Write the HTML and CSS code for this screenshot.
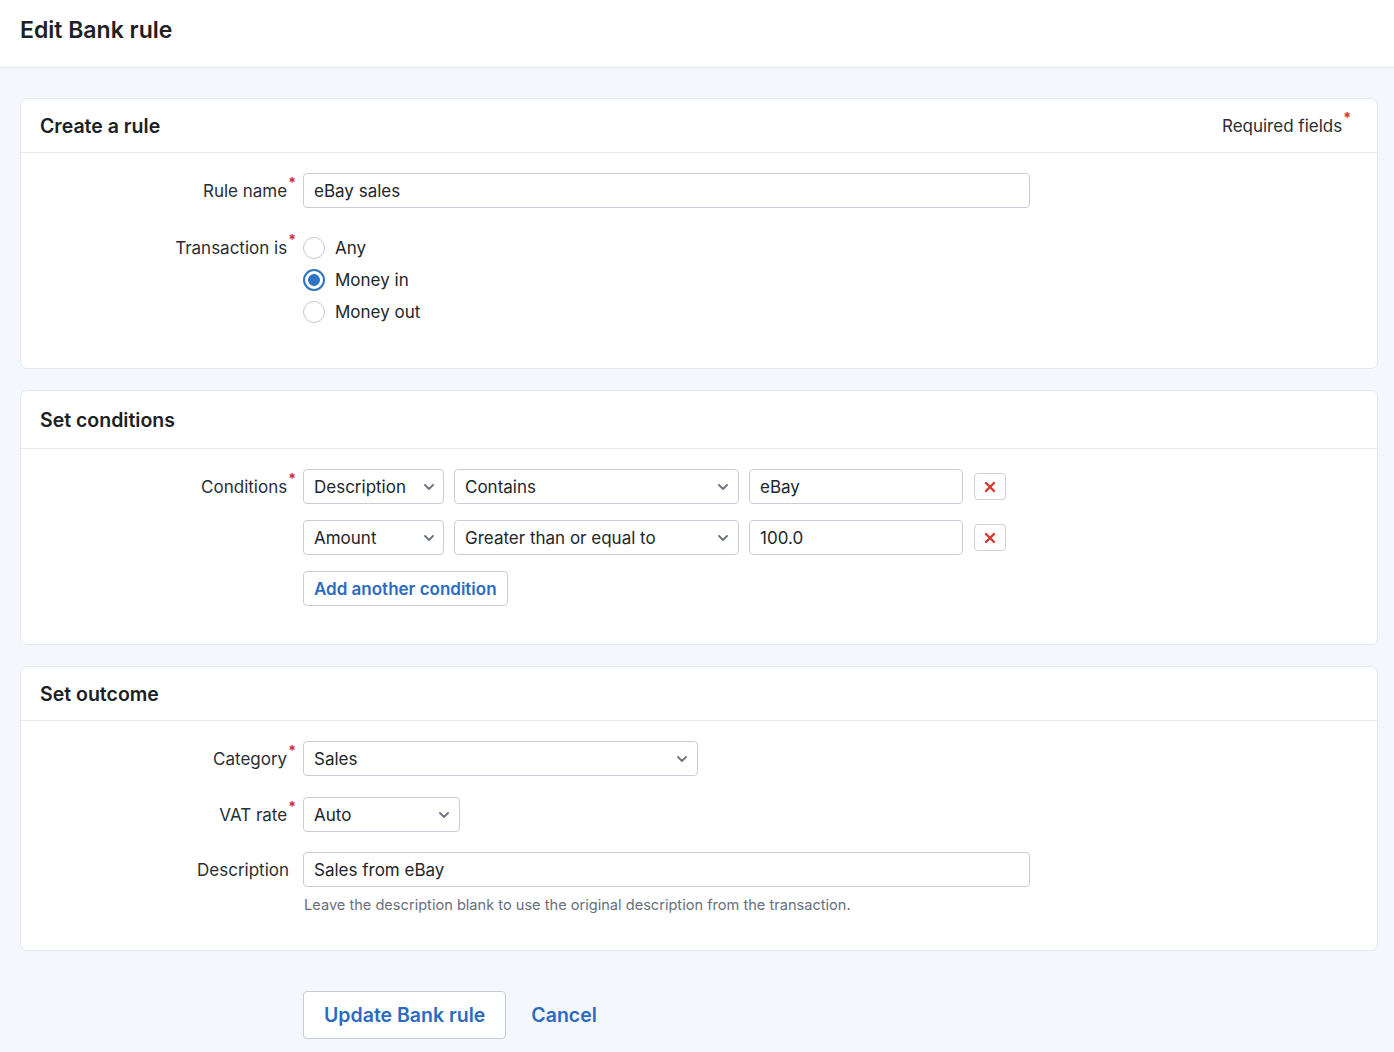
FILE: index.html
```html
<!DOCTYPE html>
<html lang="en">
<head>
<meta charset="utf-8">
<title>Edit Bank rule</title>
<link rel="stylesheet" href="styles.css">
</head>
<body>
<header class="page-header">
  <h1 class="page-title">Edit Bank rule</h1>
</header>
<main class="page-body">
  <section class="card">
    <div class="card-head">
      <h2 class="card-title">Create a rule</h2>
      <span class="req-note">Required fields<span class="star">*</span></span>
    </div>
    <div class="card-body body-rule">
      <div class="row">
        <label class="label">Rule name<span class="star">*</span></label>
        <div class="field input wide">eBay sales</div>
      </div>
      <div class="row row-top">
        <label class="label label-radio">Transaction is<span class="star">*</span></label>
        <div class="radios">
          <div class="radio-item"><span class="radio"></span>Any</div>
          <div class="radio-item"><span class="radio checked"></span>Money in</div>
          <div class="radio-item"><span class="radio"></span>Money out</div>
        </div>
      </div>
    </div>
  </section>

  <section class="card">
    <div class="card-head head-tall">
      <h2 class="card-title">Set conditions</h2>
    </div>
    <div class="card-body body-cond">
      <div class="row">
        <label class="label">Conditions<span class="star">*</span></label>
        <div class="cond">
          <div class="field select w-field">Description<svg class="chev" viewBox="0 0 10 6"><path d="M1 1l4 4 4-4"/></svg></div>
          <div class="field select w-op">Contains<svg class="chev" viewBox="0 0 10 6"><path d="M1 1l4 4 4-4"/></svg></div>
          <div class="field input w-val">eBay</div>
          <button class="remove" type="button"><svg viewBox="0 0 12 12"><path d="M2 2l8 8M10 2l-8 8"/></svg></button>
        </div>
      </div>
      <div class="row">
        <span class="label"></span>
        <div class="cond">
          <div class="field select w-field">Amount<svg class="chev" viewBox="0 0 10 6"><path d="M1 1l4 4 4-4"/></svg></div>
          <div class="field select w-op">Greater than or equal to<svg class="chev" viewBox="0 0 10 6"><path d="M1 1l4 4 4-4"/></svg></div>
          <div class="field input w-val">100.0</div>
          <button class="remove" type="button"><svg viewBox="0 0 12 12"><path d="M2 2l8 8M10 2l-8 8"/></svg></button>
        </div>
      </div>
      <div class="row">
        <span class="label"></span>
        <button class="btn-add" type="button">Add another condition</button>
      </div>
    </div>
  </section>

  <section class="card">
    <div class="card-head">
      <h2 class="card-title">Set outcome</h2>
    </div>
    <div class="card-body body-out">
      <div class="row">
        <label class="label">Category<span class="star">*</span></label>
        <div class="field select w-cat">Sales<svg class="chev" viewBox="0 0 10 6"><path d="M1 1l4 4 4-4"/></svg></div>
      </div>
      <div class="row">
        <label class="label">VAT rate<span class="star">*</span></label>
        <div class="field select w-vat">Auto<svg class="chev" viewBox="0 0 10 6"><path d="M1 1l4 4 4-4"/></svg></div>
      </div>
      <div class="row row-top row-desc">
        <label class="label label-desc">Description</label>
        <div class="desc-wrap">
          <div class="field input wide">Sales from eBay</div>
          <p class="help">Leave the description blank to use the original description from the transaction.</p>
        </div>
      </div>
    </div>
  </section>

  <div class="actions">
    <button class="btn-primary" type="button">Update Bank rule</button>
    <a class="link-cancel" href="#">Cancel</a>
  </div>
</main>
</body>
</html>
```

FILE: styles.css
```css
* { box-sizing: border-box; }
html, body { margin: 0; padding: 0; }
body {
  font-family: Inter, "Noto Sans", "Liberation Sans", sans-serif;
  color: #1f2328;
  background: #f4f7fc;
  font-size: 17px;
}
.page-header {
  background: #fff;
  height: 68px;
  border-bottom: 1px solid #e6eaf0;
  display: flex;
  align-items: center;
  padding: 0 20px;
}
.page-title {
  margin: 0;
  font-size: 23px;
  font-weight: 600;
  letter-spacing: 0;
  color: #1d2125;
  padding-bottom: 8px;
}
.page-body {
  padding: 30px 16px 20px 20px;
  display: flex;
  flex-direction: column;
}
.card {
  background: #fff;
  border: 1px solid #e3e8ef;
  border-radius: 7px;
  margin-bottom: 21px;
}
.card-head {
  height: 54px;
  border-bottom: 1px solid #e6e9ee;
  display: flex;
  align-items: center;
  justify-content: space-between;
  padding: 0 26px 0 19px;
}
.head-tall { height: 58px; }
.card-title {
  margin: 0;
  font-size: 19.5px;
  font-weight: 600;
  color: #1d2125;
}
.req-note {
  font-size: 17px;
  color: #2a2e33;
}
.star {
  color: #d0302b;
  font-size: 14px;
  font-weight: 700;
  position: relative;
  top: -9px;
  margin-left: 1px;
}
.card-body {
  padding: 20px 0 40px 0;
  display: flex;
  flex-direction: column;
}
.body-rule { gap: 24px; }
.body-cond { gap: 16px; padding-bottom: 38px; }
.body-out { gap: 21px; padding-bottom: 36px; }
.body-out .row-desc { margin-top: -1px; }
.row {
  display: flex;
  align-items: center;
}
.row-top { align-items: flex-start; }
.label {
  width: 275px;
  flex: none;
  margin-right: 7px;
  text-align: right;
  font-size: 17px;
  color: #2a2e33;
  white-space: nowrap;
}
.label-radio { padding-top: 6px; }
.label-desc { padding-top: 8px; padding-right: 7px; }
.field {
  height: 35px;
  border: 1px solid #c9ced6;
  border-radius: 4px;
  background: #fff;
  display: flex;
  align-items: center;
  padding: 0 10px;
  font-size: 17px;
  color: #22262a;
}
.wide { width: 727px; }
.select { justify-content: space-between; }
.chev {
  width: 10px;
  height: 6px;
  fill: none;
  stroke: #6e7680;
  stroke-width: 1.9;
  stroke-linecap: round;
  stroke-linejoin: round;
}
.radios {
  display: flex;
  flex-direction: column;
}
.radio-item {
  height: 32px;
  display: flex;
  align-items: center;
  font-size: 17px;
  color: #22262a;
}
.radio {
  width: 22px;
  height: 22px;
  border: 1px solid #c4cad2;
  border-radius: 50%;
  margin-right: 10px;
  background: #fff;
}
.radio.checked {
  border: 2px solid #2f73c6;
  background: radial-gradient(circle, #2f73c6 0 5.5px, #fff 6.3px);
}
.cond {
  display: flex;
  align-items: center;
  gap: 10px;
}
.w-field { width: 141px; padding-right: 9px; }
.w-op { width: 285px; }
.w-val { width: 214px; }
.remove {
  width: 32px;
  height: 27px;
  border: 1px solid #cdd2d9;
  border-radius: 4px;
  background: #fff;
  display: flex;
  align-items: center;
  justify-content: center;
  padding: 0;
  margin-left: 1px;
}
.remove svg {
  width: 12px;
  height: 12px;
  fill: none;
  stroke: #d8362c;
  stroke-width: 2.4;
  stroke-linecap: round;
}
.btn-add {
  height: 35px;
  padding: 0 10px;
  border: 1px solid #c9ced6;
  border-radius: 4px;
  background: #fff;
  font-family: inherit;
  font-size: 17px;
  font-weight: 600;
  color: #2c6bc2;
}
.w-cat { width: 395px; }
.w-vat { width: 157px; }
.desc-wrap { display: flex; flex-direction: column; }
.help {
  margin: 9px 0 0 1px;
  font-size: 14.6px;
  color: #67707b;
}
.actions {
  display: flex;
  align-items: center;
  padding-left: 283px;
  margin-top: 19px;
}
.btn-primary {
  height: 48px;
  padding: 0 20px;
  border: 1px solid #c6ccd4;
  border-radius: 4px;
  background: #fff;
  font-family: inherit;
  font-size: 19.5px;
  font-weight: 600;
  color: #2c6bc2;
}
.link-cancel {
  margin-left: 25px;
  font-size: 19.5px;
  font-weight: 600;
  color: #2c6bc2;
  text-decoration: none;
}
```
